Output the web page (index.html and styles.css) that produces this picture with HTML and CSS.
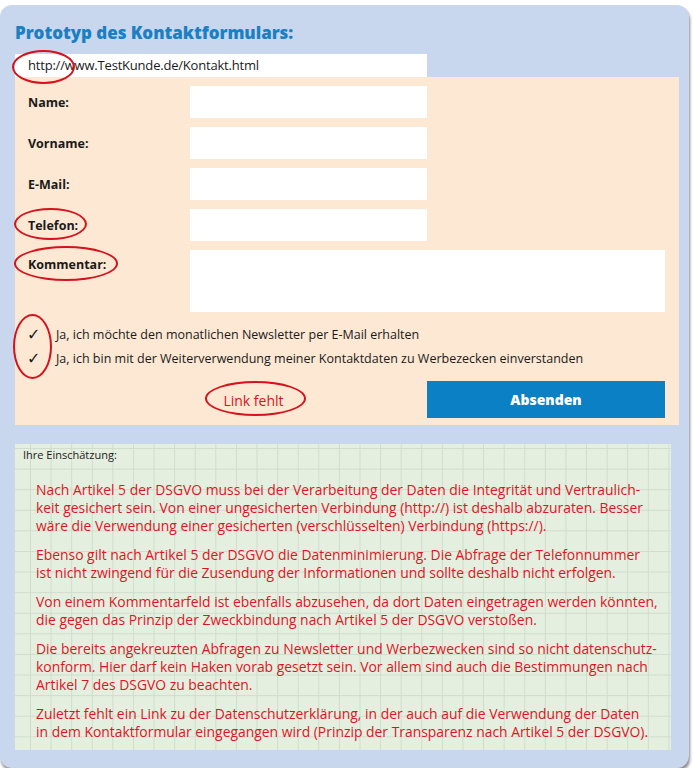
FILE: index.html
```html
<!DOCTYPE html>
<html lang="de">
<head>
<meta charset="utf-8">
<title>Prototyp des Kontaktformulars</title>
<link rel="stylesheet" href="styles.css">
</head>
<body>
<div class="panel">
  <h1 class="title">Prototyp des Kontaktformulars:</h1>
  <div class="url">http://www.TestKunde.de/Kontakt.html<span class="ring ring-url"></span></div>
  <div class="form">
    <div class="row"><span class="label">Name:</span><span class="input"></span></div>
    <div class="row"><span class="label">Vorname:</span><span class="input"></span></div>
    <div class="row"><span class="label">E-Mail:</span><span class="input"></span></div>
    <div class="row"><span class="label">Telefon:<span class="ring ring-tel"></span></span><span class="input"></span></div>
    <div class="row row-top"><span class="label label-top">Kommentar:<span class="ring ring-kom"></span></span><span class="textarea"></span></div>
    <div class="checks">
      <span class="ring ring-check"></span>
      <div class="check"><span class="mark">✓</span><span>Ja, ich möchte den monatlichen Newsletter per E-Mail erhalten</span></div>
      <div class="check"><span class="mark">✓</span><span>Ja, ich bin mit der Weiterverwendung meiner Kontaktdaten zu Werbezecken einverstanden</span></div>
    </div>
    <div class="actions">
      <div class="missing"><span class="missing-text">Link fehlt<span class="ring ring-link"></span></span></div>
      <div class="button">Absenden</div>
    </div>
  </div>
  <div class="assess">
    <div class="assess-head">Ihre Einschätzung:</div>
    <p>Nach Artikel 5 der DSGVO muss bei der Verarbeitung der Daten die Integrität und Vertraulich-<br>keit gesichert sein. Von einer ungesicherten Verbindung (http://) ist deshalb abzuraten. Besser<br>wäre die Verwendung einer gesicherten (verschlüsselten) Verbindung (https://).</p>
    <p>Ebenso gilt nach Artikel 5 der DSGVO die Datenminimierung. Die Abfrage der Telefonnummer<br>ist nicht zwingend für die Zusendung der Informationen und sollte deshalb nicht erfolgen.</p>
    <p>Von einem Kommentarfeld ist ebenfalls abzusehen, da dort Daten eingetragen werden könnten,<br>die gegen das Prinzip der Zweckbindung nach Artikel 5 der DSGVO verstoßen.</p>
    <p>Die bereits angekreuzten Abfragen zu Newsletter und Werbezwecken sind so nicht datenschutz-<br>konform. Hier darf kein Haken vorab gesetzt sein. Vor allem sind auch die Bestimmungen nach<br>Artikel 7 des DSGVO zu beachten.</p>
    <p>Zuletzt fehlt ein Link zu der Datenschutzerklärung, in der auch auf die Verwendung der Daten<br>in dem Kontaktformular eingegangen wird (Prinzip der Transparenz nach Artikel 5 der DSGVO).</p>
  </div>
</div>
</body>
</html>
```
FILE: styles.css
```css
* { box-sizing: border-box; }
html, body { margin: 0; padding: 0; background: #ffffff; }
body { font-family: "Open Sans", "Noto Sans", sans-serif; color: #1a1a1a; }

.panel {
  width: 689px;
  height: 763px;
  margin-top: 5px;
  background: #c9d7ee;
  border-radius: 12px;
  box-shadow: 1px 3px 3px rgba(60, 60, 60, 0.6);
  padding: 17px 10px 0 15px;
}

.title {
  margin: 0;
  font-size: 17px;
  font-weight: 800;
  color: #1b7fc3;
  line-height: 22px;
  height: 32px;
  letter-spacing: -0.05px;
}

.url {
  position: relative;
  width: 412px;
  height: 23px;
  background: #ffffff;
  font-size: 13px;
  line-height: 23px;
  padding-left: 13px;
  letter-spacing: -0.2px;
}

.form {
  width: 664px;
  background: #fde8d4;
  padding: 9px 0 7px 0;
}

.row {
  display: flex;
  align-items: center;
  margin-bottom: 9px;
}
.row-top { align-items: flex-start; margin-bottom: 9px; }

.label {
  position: relative;
  width: 175px;
  padding-left: 13px;
  font-size: 12.5px;
  font-weight: 700;
}
.label-top { padding-top: 6px; }

.input {
  display: block;
  width: 237px;
  height: 32px;
  background: #ffffff;
}
.textarea {
  display: block;
  width: 475px;
  height: 62px;
  background: #ffffff;
}

.checks {
  position: relative;
  padding-top: 1px;
}
.check {
  display: flex;
  align-items: center;
  height: 24px;
  font-size: 12.5px;
}
.mark {
  width: 41px;
  padding-left: 12px;
  font-size: 16px;
  font-family: "DejaVu Sans", sans-serif;
}

.actions {
  display: flex;
  align-items: center;
  margin-top: 11px;
}
.missing {
  width: 412px;
  text-align: center;
  padding-left: 65px;
}
.missing-text {
  position: relative;
  color: #d6121c;
  font-size: 14px;
}
.button {
  width: 238px;
  height: 37px;
  background: #0b80c4;
  color: #ffffff;
  font-weight: 800;
  font-size: 14px;
  display: flex;
  align-items: center;
  justify-content: center;
}

.ring {
  position: absolute;
  border: 2.5px solid #d6121c;
  border-radius: 50%;
}
.ring-url { left: -3px; top: -4px; width: 63px; height: 34px; }
.ring-tel { left: -1px; top: -9px; width: 73px; height: 32px; }
.ring-kom { left: -1px; top: -4px; width: 104px; height: 35px; }
.ring-check { left: -2px; top: -7px; width: 39px; height: 65px; }
.ring-link { left: -18px; top: -10px; width: 101px; height: 35px; }

.assess {
  width: 656px;
  margin-top: 19px;
  height: 306px;
  background-color: #e4efdf;
  background-image:
    linear-gradient(to right, #d0ddcc 1px, transparent 1px),
    linear-gradient(to bottom, #d0ddcc 1px, transparent 1px);
  background-size: 20.6px 20.6px;
  background-position: 15px 4px;
  padding: 3px 0 0 0;
}
.assess-head {
  padding-left: 8px;
  font-size: 11px;
  line-height: 16px;
  color: #1a1a1a;
}
.assess p {
  margin: 0 0 11px 0;
  padding-left: 21px;
  color: #e0141f;
  font-size: 13.9px;
  line-height: 18px;
  white-space: nowrap;
}
.assess p:first-of-type { margin-top: 18px; }
```
